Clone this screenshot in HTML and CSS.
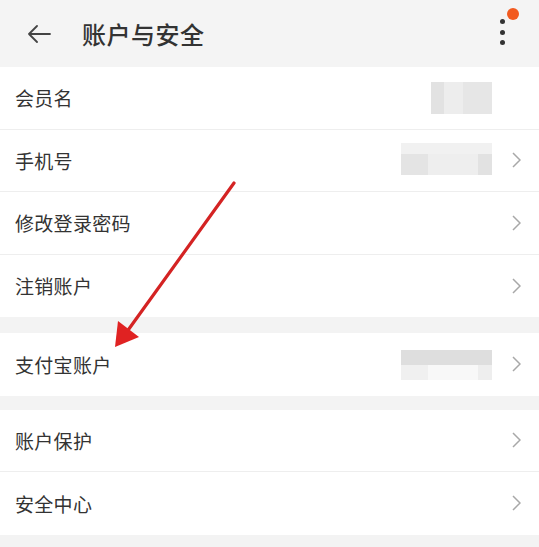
FILE: index.html
```html
<!DOCTYPE html>
<html lang="zh-CN">
<head>
<meta charset="utf-8">
<title>账户与安全</title>
<link rel="stylesheet" href="styles.css">
</head>
<body>
<div class="page">
  <header class="topbar">
    <svg class="back" width="24" height="18" viewBox="0 0 24 18"><path d="M23 9H2M10 1L2 9L10 17" fill="none" stroke="#444" stroke-width="1.8" stroke-linecap="round" stroke-linejoin="round"/></svg>
    <h1 class="title">账户与安全</h1>
    <div class="menu">
      <span class="dot"></span><span class="dot"></span><span class="dot"></span>
      <span class="badge"></span>
    </div>
  </header>

  <section class="group">
    <div class="row">
      <span class="label">会员名</span>
      <span class="value v-short"></span>
      <svg class="chev hidden" width="9" height="16" viewBox="0 0 9 16"><path d="M1 1L8 8L1 15" fill="none" stroke="#a8a8a8" stroke-width="1.5"/></svg>
    </div>
    <div class="row">
      <span class="label">手机号</span>
      <span class="value v-long"></span>
      <svg class="chev" width="9" height="16" viewBox="0 0 9 16"><path d="M1 1L8 8L1 15" fill="none" stroke="#a8a8a8" stroke-width="1.5"/></svg>
    </div>
    <div class="row">
      <span class="label">修改登录密码</span>
      <svg class="chev" width="9" height="16" viewBox="0 0 9 16"><path d="M1 1L8 8L1 15" fill="none" stroke="#a8a8a8" stroke-width="1.5"/></svg>
    </div>
    <div class="row">
      <span class="label">注销账户</span>
      <svg class="chev" width="9" height="16" viewBox="0 0 9 16"><path d="M1 1L8 8L1 15" fill="none" stroke="#a8a8a8" stroke-width="1.5"/></svg>
    </div>
  </section>

  <section class="group g2">
    <div class="row">
      <span class="label">支付宝账户</span>
      <span class="value v-alipay"></span>
      <svg class="chev" width="9" height="16" viewBox="0 0 9 16"><path d="M1 1L8 8L1 15" fill="none" stroke="#a8a8a8" stroke-width="1.5"/></svg>
    </div>
  </section>

  <section class="group g3">
    <div class="row">
      <span class="label">账户保护</span>
      <svg class="chev" width="9" height="16" viewBox="0 0 9 16"><path d="M1 1L8 8L1 15" fill="none" stroke="#a8a8a8" stroke-width="1.5"/></svg>
    </div>
    <div class="row">
      <span class="label">安全中心</span>
      <svg class="chev" width="9" height="16" viewBox="0 0 9 16"><path d="M1 1L8 8L1 15" fill="none" stroke="#a8a8a8" stroke-width="1.5"/></svg>
    </div>
  </section>

  <svg class="annot" width="539" height="547" viewBox="0 0 539 547">
    <line x1="234" y1="183" x2="126" y2="333" stroke="#d42323" stroke-width="3.2" stroke-linecap="round"/>
    <polygon points="115,347 118,321 139,337" fill="#e02222"/>
  </svg>
</div>
</body>
</html>
```

FILE: styles.css
```css
* { box-sizing: border-box; }
html, body { margin: 0; padding: 0; }
body {
  background: #f3f3f3;
  font-family: "Noto Sans CJK SC", "Noto Sans", sans-serif;
  color: #333;
}
.page {
  position: relative;
  width: 539px;
  height: 547px;
  overflow: hidden;
  background: #f3f3f3;
}
.topbar {
  height: 67px;
  display: flex;
  align-items: center;
  padding-left: 27px;
  padding-right: 34px;
  background: #f4f4f4;
}
.back { flex: none; }
.title {
  margin: 0 0 0 31px;
  font-size: 24px;
  font-weight: 500;
  color: #333;
  letter-spacing: 0.5px;
  line-height: 1;
}
.menu {
  margin-left: auto;
  margin-top: -3px;
  position: relative;
  display: flex;
  flex-direction: column;
  align-items: center;
  gap: 5.5px;
  width: 6px;
}
.dot {
  width: 5px;
  height: 5px;
  border-radius: 50%;
  background: #333;
}
.badge {
  position: absolute;
  left: 8px;
  top: -11px;
  width: 12px;
  height: 12px;
  border-radius: 50%;
  background: #f25a1f;
}
.group { background: #fff; }
.g2 { margin-top: 16px; }
.g3 { margin-top: 14px; }
.row {
  height: 62.5px;
  display: flex;
  align-items: center;
  padding-left: 15px;
  padding-right: 18px;
  border-bottom: 1px solid #eeeeee;
}
.row:last-child { border-bottom: none; }
.label {
  font-size: 19px;
  color: #333;
  letter-spacing: 0.3px;
}
.value {
  margin-left: auto;
  margin-right: 20px;
  height: 32px;
}
.v-short {
  width: 61px;
  background: linear-gradient(to right, #e2e2e2 0 22%, #ededed 22% 52%, #e6e6e6 52% 100%);
  margin-top: 1px;
}
.v-long {
  width: 91px;
  background:
    linear-gradient(to bottom, #f1f1f1 0 35%, transparent 35%),
    linear-gradient(to right, #e4e4e4 0 30%, #eeeeee 30% 85%, #e2e2e2 85% 100%);
  margin-top: -3px;
}
.v-alipay {
  width: 91px;
  height: 30px;
  background:
    linear-gradient(to bottom, #dedede 0 50%, transparent 50%),
    linear-gradient(to right, #f0f0f0 0 30%, #f8f8f8 30% 85%, #eeeeee 85% 100%);
  margin-top: 2px;
}
.row .chev { flex: none; }
.row > .label + .chev { margin-left: auto; }
.hidden { visibility: hidden; }
.annot {
  position: absolute;
  left: 0;
  top: 0;
  pointer-events: none;
}
```
